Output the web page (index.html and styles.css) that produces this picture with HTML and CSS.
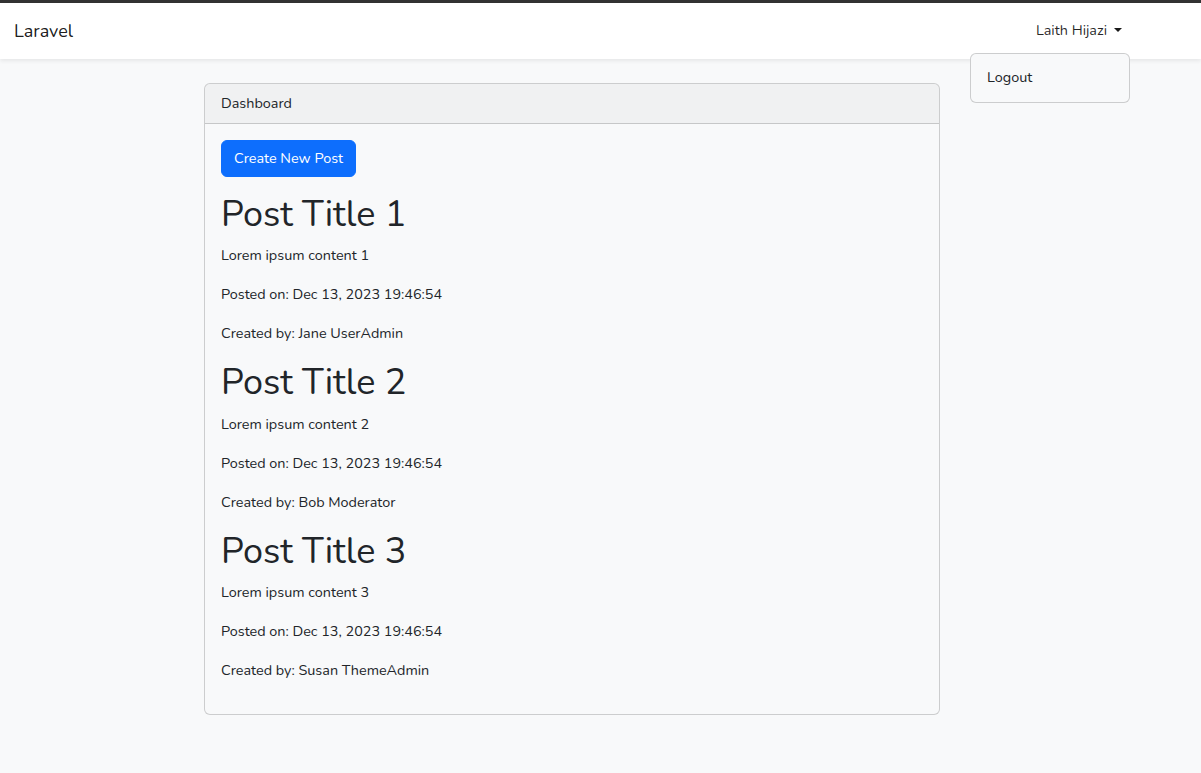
FILE: index.html
```html
<!DOCTYPE html>
<html lang="en">
<head>
<meta charset="utf-8">
<title>Laravel</title>
<link rel="stylesheet" href="styles.css">
</head>
<body>
<div class="topbar"></div>
<nav class="navbar">
  <div class="container nav-inner">
    <a class="brand" href="#">Laravel</a>
    <div class="nav-right">
      <a class="nav-link" href="#">Laith Hijazi<span class="caret"></span></a>
      <div class="dropdown-menu">
        <a class="dropdown-item" href="#">Logout</a>
      </div>
    </div>
  </div>
</nav>
<main class="main">
  <div class="container">
    <div class="row">
      <div class="card">
        <div class="card-header">Dashboard</div>
        <div class="card-body">
          <div class="btn-wrap"><a class="btn" href="#">Create New Post</a></div>
          <h1 class="post-title">Post Title 1</h1>
          <p>Lorem ipsum content 1</p>
          <p>Posted on: Dec 13, 2023 19:46:54</p>
          <p>Created by: Jane UserAdmin</p>
          <h1 class="post-title">Post Title 2</h1>
          <p>Lorem ipsum content 2</p>
          <p>Posted on: Dec 13, 2023 19:46:54</p>
          <p>Created by: Bob Moderator</p>
          <h1 class="post-title">Post Title 3</h1>
          <p>Lorem ipsum content 3</p>
          <p>Posted on: Dec 13, 2023 19:46:54</p>
          <p>Created by: Susan ThemeAdmin</p>
        </div>
      </div>
    </div>
  </div>
</main>
</body>
</html>
```

FILE: styles.css
```css
* { box-sizing: border-box; }
html, body { margin: 0; padding: 0; }
body {
  font-family: "Nunito", "Noto Sans", sans-serif;
  font-size: 14.4px;
  line-height: 1.6;
  color: #212529;
  background: #f8f9fa;
}
a { text-decoration: none; }
.topbar { height: 3px; background: #333; }
.navbar {
  background: #fff;
  box-shadow: 0 2px 4px rgba(0,0,0,.075);
  position: relative;
  z-index: 2;
}
.container {
  width: 1140px;
  margin-left: 2px;
  padding: 0 12px;
}
.nav-inner {
  display: flex;
  align-items: center;
  justify-content: space-between;
  height: 56px;
}
.brand {
  font-size: 18px;
  color: rgba(0,0,0,.9);
  padding: 5px 0;
}
.nav-right { position: relative; }
.nav-link {
  display: block;
  padding: 8px 8px;
  color: rgba(0,0,0,.85);
}
.caret {
  display: inline-block;
  margin-left: 7px;
  vertical-align: 3px;
  border-top: 4.5px solid rgba(0,0,0,.9);
  border-left: 4.5px solid transparent;
  border-right: 4.5px solid transparent;
}
.dropdown-menu {
  position: absolute;
  right: 0;
  top: 42px;
  width: 160px;
  padding: 8px 0;
  background: #f8f9fa;
  border: 1px solid rgba(0,0,0,.175);
  border-radius: 6px;
}
.dropdown-item {
  display: block;
  padding: 4px 16px;
  color: #212529;
}
.main { padding: 24px 0; }
.row {
  display: flex;
  justify-content: center;
  margin: 0 -12px;
}
.card {
  width: 736px;
  border: 1px solid rgba(0,0,0,.175);
  border-radius: 6px;
  background: #f8f9fa;
}
.card-header {
  padding: 8px 16px;
  background: rgba(0,0,0,.03);
  border-bottom: 1px solid rgba(0,0,0,.175);
  border-radius: 5px 5px 0 0;
}
.card-body { padding: 16px; }
.btn-wrap { margin-bottom: 16px; }
.btn {
  display: inline-block;
  padding: 6px 12px;
  background: #0d6efd;
  color: #fff;
  border: 1px solid #0d6efd;
  border-radius: 6px;
}
.post-title {
  font-size: 36px;
  font-weight: 400;
  line-height: 1.2;
  margin: 0 0 8px;
}
p { margin: 0 0 16px; }
```
